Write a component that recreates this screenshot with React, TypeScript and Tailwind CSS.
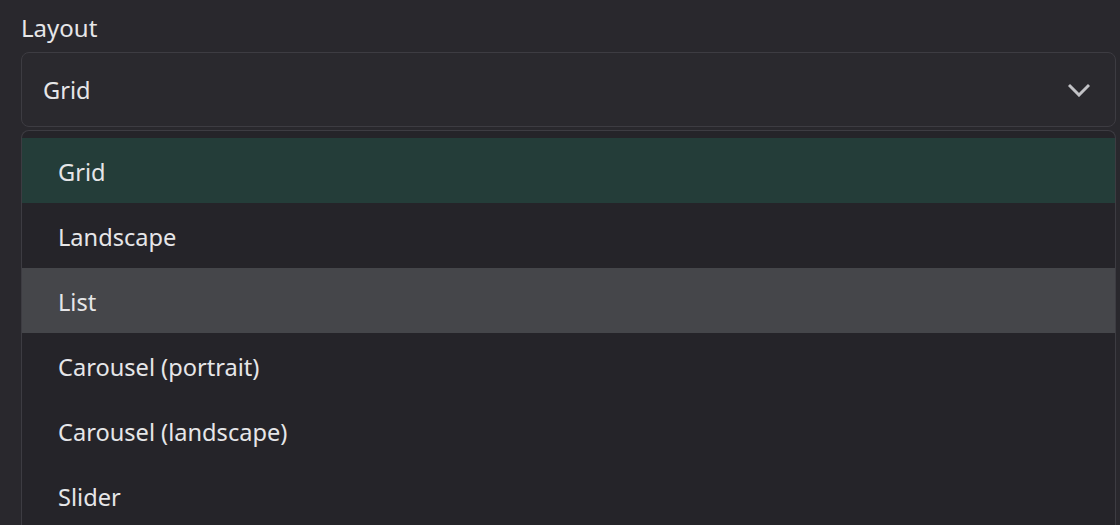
const OPTIONS = [
  "Grid",
  "Landscape",
  "List",
  "Carousel (portrait)",
  "Carousel (landscape)",
  "Slider",
]

function Chevron() {
  return (
    <svg width="22" height="14" viewBox="0 0 22 14" fill="none" className="text-[#c2c2c6]">
      <path d="M2 3l9 9 9-9" stroke="currentColor" strokeWidth="3" strokeLinecap="square" />
    </svg>
  )
}

export default function App() {
  const selected = "Grid"
  const hovered = "List"

  return (
    <div className="h-[525px] w-[1120px] overflow-hidden bg-[#29282d] font-['Noto_Sans',sans-serif] text-[#e6e6e8]">
      <div className="pl-[21px] pr-[4px] pt-[12px]">
        <div className="text-[24px] leading-[32px]">Layout</div>

        <div className="mt-[8px] flex h-[75px] items-center justify-between rounded-[8px] border border-[#3d3c42] bg-[#2a292e] pl-[21px] pr-[25px]">
          <span className="pt-[3px] text-[23.6px] leading-none">Grid</span>
          <Chevron />
        </div>

        <div className="mt-[3px] rounded-t-[8px] border-x border-t border-[#3d3c42] bg-[#252429] pt-[7px]">
          {OPTIONS.map((opt) => (
            <div
              key={opt}
              className={`flex h-[65px] items-center pl-[36px] pt-[5px] text-[23.6px] ${
                opt === selected ? "bg-[#243d39]" : opt === hovered ? "bg-[#45464a]" : ""
              }`}
            >
              {opt}
            </div>
          ))}
        </div>
      </div>
    </div>
  )
}
